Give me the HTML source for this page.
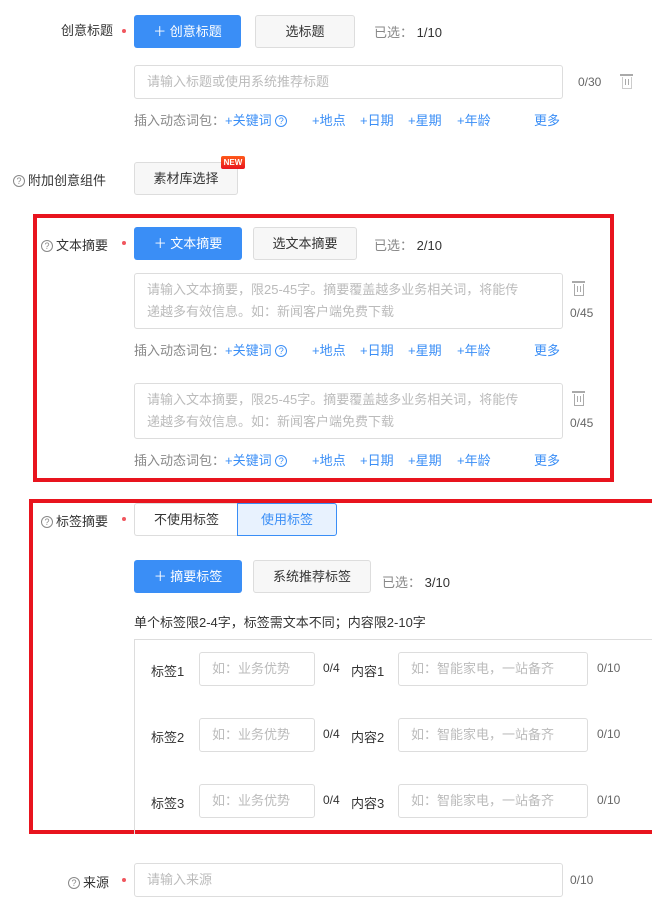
<!DOCTYPE html>
<html><head><meta charset="utf-8"><style>
*{box-sizing:border-box;margin:0;padding:0}
body{width:652px;height:898px;background:#fff;font-family:"Liberation Sans","Noto Sans CJK SC",sans-serif;font-size:13px;color:#333;position:relative;overflow:hidden}
.a{position:absolute;white-space:nowrap}
.lbl{position:absolute;text-align:right;width:113px;left:0;line-height:16px}
.dot{position:absolute;width:4px;height:4px;border-radius:50%;background:#f0565e}
.bb{position:absolute;background:#3a8ef6;color:#fff;border-radius:3px;text-align:center;line-height:33px;height:33px}
.gb{position:absolute;background:#f7f7f7;border:1px solid #ddd;border-radius:3px;text-align:center;line-height:31px;height:33px;color:#333}
.inp{position:absolute;border:1px solid #ddd;border-radius:3px;color:#bbb;padding-left:12px}
.ta{padding-right:38px;line-height:22px;padding-top:5px;white-space:normal}
.gray{color:#888}
.blue{color:#3a8ef6}
.q{display:inline-block;width:12px;height:12px;border:1px solid #888;border-radius:50%;font-size:9px;line-height:10px;text-align:center;color:#888;vertical-align:1px;margin-right:3px}
.qb{border-color:#3a8ef6;color:#3a8ef6}
.red{position:absolute;border:4px solid #e8141e}
.cnt{position:absolute;font-size:12px;color:#666}
.trash{position:absolute;width:10px;height:12px;border:1.5px solid #aaa;border-top:none}
.trash:before{content:"";position:absolute;left:-3px;top:-3px;width:13px;height:1.5px;background:#aaa}
.trash:after{content:"";position:absolute;left:2px;top:2px;width:2px;height:6px;border-left:1px solid #aaa;border-right:1px solid #aaa}
</style></head><body>

<div class="lbl" style="top:23px">创意标题</div><div class="dot" style="left:122px;top:29px"></div>
<div class="bb" style="left:134px;top:15px;width:107px">＋ 创意标题</div>
<div class="gb" style="left:255px;top:15px;width:100px">选标题</div>
<div class="a" style="left:374px;top:22px"><span class="gray">已选：</span> 1/10</div>
<div class="inp" style="left:134px;top:65px;width:429px;height:34px;line-height:32px">请输入标题或使用系统推荐标题</div>
<div class="cnt" style="left:578px;top:75px">0/30</div>
<div class="trash" style="left:622px;top:77px;border-color:#ccc"></div>
<div class="a gray" style="left:134px;top:110px">插入动态词包：<span class="blue">+关键词 <span class="q qb">?</span></span></div>
<div class="a blue" style="left:312px;top:110px">+地点</div><div class="a blue" style="left:360px;top:110px">+日期</div><div class="a blue" style="left:408px;top:110px">+星期</div><div class="a blue" style="left:457px;top:110px">+年龄</div><div class="a blue" style="left:534px;top:110px">更多</div>

<div class="a" style="left:13px;top:170px"><span class="q">?</span>附加创意组件</div>
<div class="gb" style="left:134px;top:162px;width:104px">素材库选择</div>
<div class="a" style="left:221px;top:156px;width:24px;height:13px;background:linear-gradient(#ff5a1a,#e8141e);color:#fff;font-size:8px;font-weight:bold;line-height:13px;text-align:center;border-radius:2px">NEW</div>

<div class="red" style="left:33px;top:214px;width:581px;height:268px"></div>
<div class="a" style="left:41px;top:235px"><span class="q">?</span>文本摘要</div><div class="dot" style="left:122px;top:241px"></div>
<div class="bb" style="left:134px;top:227px;width:108px">＋ 文本摘要</div>
<div class="gb" style="left:253px;top:227px;width:104px">选文本摘要</div>
<div class="a" style="left:374px;top:235px"><span class="gray">已选：</span> 2/10</div>
<div class="inp ta" style="left:134px;top:273px;width:429px;height:56px">请输入文本摘要，限25-45字。摘要覆盖越多业务相关词，将能传递越多有效信息。如：新闻客户端免费下载</div>
<div class="trash" style="left:574px;top:284px"></div>
<div class="cnt" style="left:570px;top:306px">0/45</div>
<div class="a gray" style="left:134px;top:340px">插入动态词包：<span class="blue">+关键词 <span class="q qb">?</span></span></div>
<div class="a blue" style="left:312px;top:340px">+地点</div><div class="a blue" style="left:360px;top:340px">+日期</div><div class="a blue" style="left:408px;top:340px">+星期</div><div class="a blue" style="left:457px;top:340px">+年龄</div><div class="a blue" style="left:534px;top:340px">更多</div>
<div class="inp ta" style="left:134px;top:383px;width:429px;height:56px">请输入文本摘要，限25-45字。摘要覆盖越多业务相关词，将能传递越多有效信息。如：新闻客户端免费下载</div>
<div class="trash" style="left:574px;top:394px"></div>
<div class="cnt" style="left:570px;top:416px">0/45</div>
<div class="a gray" style="left:134px;top:450px">插入动态词包：<span class="blue">+关键词 <span class="q qb">?</span></span></div>
<div class="a blue" style="left:312px;top:450px">+地点</div><div class="a blue" style="left:360px;top:450px">+日期</div><div class="a blue" style="left:408px;top:450px">+星期</div><div class="a blue" style="left:457px;top:450px">+年龄</div><div class="a blue" style="left:534px;top:450px">更多</div>

<div class="red" style="left:29px;top:499px;width:630px;height:335px"></div>
<div class="a" style="left:41px;top:511px"><span class="q">?</span>标签摘要</div><div class="dot" style="left:122px;top:517px"></div>
<div class="a" style="left:134px;top:503px;width:104px;height:33px;border:1px solid #ddd;border-right:none;border-radius:3px 0 0 3px;text-align:center;line-height:31px">不使用标签</div>
<div class="a blue" style="left:237px;top:503px;width:100px;height:33px;border:1px solid #3a8ef6;background:#e8f2fe;border-radius:0 3px 3px 0;text-align:center;line-height:31px">使用标签</div>
<div class="bb" style="left:134px;top:560px;width:108px">＋ 摘要标签</div>
<div class="gb" style="left:253px;top:560px;width:118px">系统推荐标签</div>
<div class="a" style="left:382px;top:572px"><span class="gray">已选：</span> 3/10</div>
<div class="a" style="left:134px;top:612px">单个标签限2-4字，标签需文本不同；内容限2-10字</div>
<div class="a" style="left:134px;top:639px;width:530px;height:195px;border:1px solid #ddd;border-bottom:none"></div>

<div class="a" style="left:151px;top:661px">标签1</div><div class="inp" style="left:199px;top:652px;width:116px;height:34px;line-height:32px">如：业务优势</div><div class="cnt" style="left:323px;top:661px;color:#333">0/4</div><div class="a" style="left:351px;top:661px">内容1</div><div class="inp" style="left:398px;top:652px;width:190px;height:34px;line-height:32px">如：智能家电，一站备齐</div><div class="cnt" style="left:597px;top:661px">0/10</div>
<div class="a" style="left:151px;top:727px">标签2</div><div class="inp" style="left:199px;top:718px;width:116px;height:34px;line-height:32px">如：业务优势</div><div class="cnt" style="left:323px;top:727px;color:#333">0/4</div><div class="a" style="left:351px;top:727px">内容2</div><div class="inp" style="left:398px;top:718px;width:190px;height:34px;line-height:32px">如：智能家电，一站备齐</div><div class="cnt" style="left:597px;top:727px">0/10</div>
<div class="a" style="left:151px;top:793px">标签3</div><div class="inp" style="left:199px;top:784px;width:116px;height:34px;line-height:32px">如：业务优势</div><div class="cnt" style="left:323px;top:793px;color:#333">0/4</div><div class="a" style="left:351px;top:793px">内容3</div><div class="inp" style="left:398px;top:784px;width:190px;height:34px;line-height:32px">如：智能家电，一站备齐</div><div class="cnt" style="left:597px;top:793px">0/10</div>

<div class="a" style="left:68px;top:872px"><span class="q">?</span>来源</div><div class="dot" style="left:122px;top:878px"></div>
<div class="inp" style="left:134px;top:863px;width:429px;height:34px;line-height:32px">请输入来源</div>
<div class="cnt" style="left:570px;top:873px">0/10</div>
</body></html>
